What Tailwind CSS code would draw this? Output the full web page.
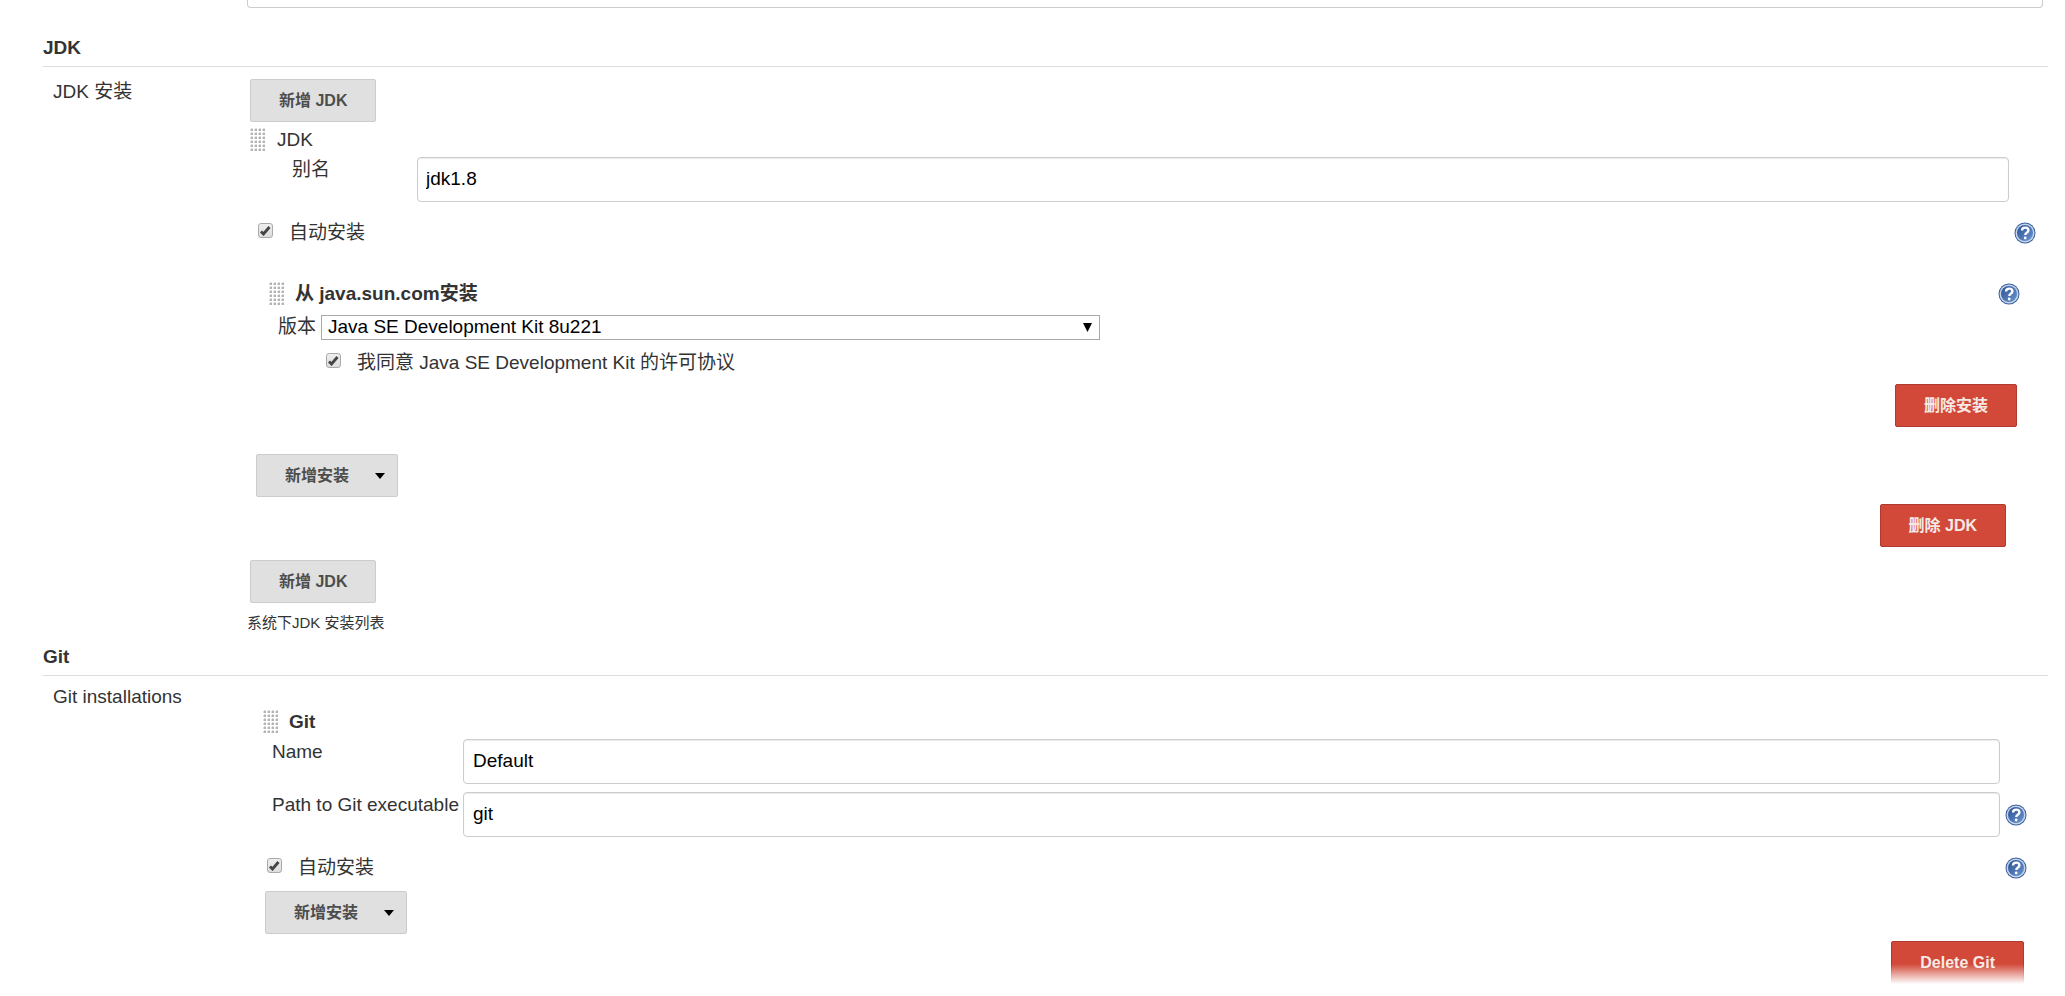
<!DOCTYPE html>
<html lang="zh-CN">
<head>
<meta charset="utf-8">
<title>JDK / Git</title>
<script src="https://cdn.jsdelivr.net/npm/@tailwindcss/browser@4"></script>
</head>
<body class="bg-white text-[#333] text-[19px] leading-[26px] font-['Liberation_Sans','Noto_Sans_CJK_SC',sans-serif]">
<svg class="absolute w-0 h-0" aria-hidden="true">
  <defs>
    <linearGradient id="blue" x1="0" y1="0" x2="1" y2="1"><stop offset="0" stop-color="#2c4f92"/><stop offset="1" stop-color="#6a97cf"/></linearGradient>
    <pattern id="dot" width="4" height="4" patternUnits="userSpaceOnUse"><path d="M1 0h2v1h-2zM0 1h3v2h-3z" fill="#ddd"/><path d="M1 1h2v2h-2z" fill="#b4b4b4"/></pattern>
    <symbol id="help" viewBox="0 0 22 22"><circle cx="11" cy="11" r="10.500" fill="#3a5f9c"/><circle cx="11" cy="11" r="9.500" fill="#c5d5ec"/><circle cx="11" cy="11" r="8" fill="url(#blue)"/><path d="M8 8.600q0-3 3.200-3t3.200 2.600q0 1.500-1.700 2.600-1.400.9-1.400 2.200" fill="none" stroke="#fff" stroke-width="2.400"/><circle cx="11.200" cy="16" r="1.400" fill="#fff"/></symbol>
    <symbol id="grip" viewBox="0 0 16 25"><rect width="16" height="24" fill="url(#dot)"/></symbol>
  </defs>
</svg>

<main class="pl-[43px] pr-[17px] overflow-hidden">
  <div class="ml-[204px] mr-[5px] h-2 border border-t-0 border-[#ccc] rounded-b-[4px]"></div>

  <section>
    <h2 class="mt-[27px] h-8 border-b border-[#ddd] font-bold">JDK</h2>
    <div class="flex">
      <div class="w-[204px] shrink-0 pl-[10px] pt-3">JDK 安装</div>
      <div class="flex-1 pt-3">
        <button class="ml-[3px] block h-[43px] px-7 bg-[#e0e0e0] border border-[#ccc] rounded-[2px] text-[16px] font-bold text-[#4d4d4d]">新增 JDK</button>
        <div class="ml-[3px] mt-[5px] flex h-[26px] items-center gap-[11px]"><svg class="w-4 h-[25px]"><use href="#grip"/></svg><span>JDK</span></div>
        <div class="ml-[45px] mt-1 mr-[39px] flex">
          <label for="alias" class="w-[125px]">别名</label>
          <input id="alias" value="jdk1.8" class="flex-1 h-[45px] px-2 pb-[2px] border border-[#ccc] rounded-[4px] shadow-[inset_0_1px_1px_rgba(0,0,0,0.08)] text-black">
        </div>
        <div class="ml-[11px] mt-[18px] mr-[12px] flex items-center">
          <input id="auto1" type="checkbox" checked class="peer appearance-none w-[15px] h-[15px] -mt-[6px] border border-[#aaa] rounded-[3px] bg-linear-to-b from-[#eee] to-[#ddd]">
          <svg class="pointer-events-none -ml-[13px] -mt-[6px] w-[11px] h-[11px] hidden peer-checked:block" viewBox="0 0 11 11"><path d="M1 6.500L3.500 9 9.500 2" fill="none" stroke="#444" stroke-width="2.800"/></svg>
          <label for="auto1" class="ml-[18px] flex-1">自动安装</label>
          <button aria-label="帮助"><svg class="w-[22px] h-[22px]"><use href="#help"/></svg></button>
        </div>
        <div class="ml-[22px] mt-[35px] mr-[28px] flex items-center">
          <svg class="w-4 h-[25px]"><use href="#grip"/></svg><h3 class="ml-[10px] flex-1 font-bold">从 java.sun.com安装</h3>
          <button aria-label="帮助"><svg class="w-[22px] h-[22px]"><use href="#help"/></svg></button>
        </div>
        <div class="ml-[31px] mt-[7px] flex items-center">
          <label for="ver" class="w-[43px]">版本</label>
          <div class="relative w-[44%]">
            <select id="ver" class="block w-full h-[25px] pl-[6px] appearance-none border border-[#a9a9a9] bg-white text-black leading-[22px]"><option>Java SE Development Kit 8u221</option></select>
            <svg class="pointer-events-none absolute right-2 top-2 w-[9px] h-[9px]" viewBox="0 0 9 9"><path d="M0 0h9L4.500 9z"/></svg>
          </div>
        </div>
        <div class="ml-[79px] mt-[10px] flex items-center">
          <input id="agree" type="checkbox" checked class="peer appearance-none w-[15px] h-[15px] -mt-[6px] border border-[#aaa] rounded-[3px] bg-linear-to-b from-[#eee] to-[#ddd]">
          <svg class="pointer-events-none -ml-[13px] -mt-[6px] w-[11px] h-[11px] hidden peer-checked:block" viewBox="0 0 11 11"><path d="M1 6.500L3.500 9 9.500 2" fill="none" stroke="#444" stroke-width="2.800"/></svg>
          <label for="agree" class="ml-[18px]">我同意 Java SE Development Kit 的许可协议</label>
        </div>
        <button class="ml-auto mr-[31px] mt-2 block h-[43px] px-7 bg-[#d24939] border border-[#b03a2e] rounded-[2px] text-[16px] font-bold text-[#f7e9e6]">删除安装</button>
        <button class="ml-[9px] mt-[27px] flex items-center h-[43px] pl-7 pr-3 gap-[26px] bg-[#e0e0e0] border border-[#ccc] rounded-[2px] text-[16px] font-bold text-[#4d4d4d]">新增安装<svg class="w-[10px] h-[6px]" viewBox="0 0 10 6"><path d="M0 0h10L5 6z" fill="#000"/></svg></button>
        <button class="ml-auto mr-[42px] mt-[7px] block h-[43px] px-7 bg-[#d24939] border border-[#b03a2e] rounded-[2px] text-[16px] font-bold text-[#f7e9e6]">删除 JDK</button>
        <button class="ml-[3px] mt-[13px] block h-[43px] px-7 bg-[#e0e0e0] border border-[#ccc] rounded-[2px] text-[16px] font-bold text-[#4d4d4d]">新增 JDK</button>
        <p class="mt-2 text-[15px] leading-[24px]">系统下JDK 安装列表</p>
      </div>
    </div>
  </section>

  <section>
    <h2 class="mt-[9px] h-8 border-b border-[#ddd] font-bold">Git</h2>
    <div class="flex">
      <div class="w-[204px] shrink-0 pl-[10px] pt-2">Git installations</div>
      <div class="flex-1 pt-[33px]">
        <div class="ml-4 flex h-[26px] items-center gap-[10px]"><svg class="w-4 h-[25px]"><use href="#grip"/></svg><h3 class="font-bold">Git</h3></div>
        <div class="ml-[25px] mt-1 mr-[21px] grid grid-cols-[191px_1fr_27px] items-start gap-y-2">
          <label for="name">Name</label>
          <input id="name" value="Default" class="h-[45px] px-[9px] pb-[2px] border border-[#ccc] rounded-[4px] shadow-[inset_0_1px_1px_rgba(0,0,0,0.08)] text-black">
          <span></span>
          <label for="path">Path to Git executable</label>
          <input id="path" value="git" class="h-[45px] px-[9px] pb-[2px] border border-[#ccc] rounded-[4px] shadow-[inset_0_1px_1px_rgba(0,0,0,0.08)] text-black">
          <button aria-label="帮助" class="self-center justify-self-end"><svg class="w-[22px] h-[22px]"><use href="#help"/></svg></button>
        </div>
        <div class="ml-5 mt-[18px] mr-[21px] flex items-center">
          <input id="auto2" type="checkbox" checked class="peer appearance-none w-[15px] h-[15px] -mt-[6px] border border-[#aaa] rounded-[3px] bg-linear-to-b from-[#eee] to-[#ddd]">
          <svg class="pointer-events-none -ml-[13px] -mt-[6px] w-[11px] h-[11px] hidden peer-checked:block" viewBox="0 0 11 11"><path d="M1 6.500L3.500 9 9.500 2" fill="none" stroke="#444" stroke-width="2.800"/></svg>
          <label for="auto2" class="ml-[18px] flex-1">自动安装</label>
          <button aria-label="帮助"><svg class="w-[22px] h-[22px]"><use href="#help"/></svg></button>
        </div>
        <button class="ml-[18px] mt-[10px] flex items-center h-[43px] pl-7 pr-3 gap-[26px] bg-[#e0e0e0] border border-[#ccc] rounded-[2px] text-[16px] font-bold text-[#4d4d4d]">新增安装<svg class="w-[10px] h-[6px]" viewBox="0 0 10 6"><path d="M0 0h10L5 6z" fill="#000"/></svg></button>
        <div class="relative mt-[7px] mr-6">
          <button class="ml-auto block h-[43px] px-7 bg-[#d24939] border border-[#b03a2e] rounded-[2px] text-[16px] font-bold text-[#f7e9e6]">Delete Git</button>
          <div class="pointer-events-none absolute inset-x-0 bottom-0 h-5 bg-linear-to-b from-white/0 to-white"></div>
        </div>
      </div>
    </div>
  </section>
</main>
</body>
</html>
